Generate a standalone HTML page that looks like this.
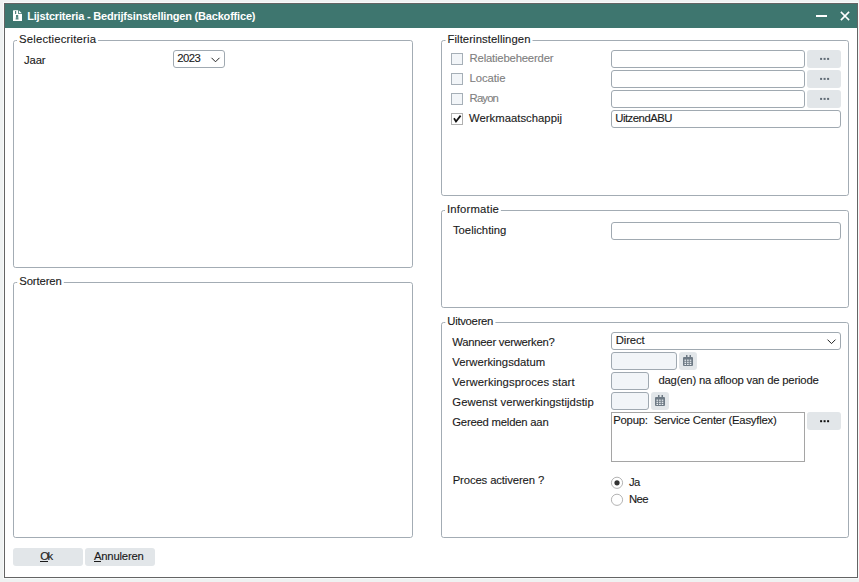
<!DOCTYPE html>
<html><head><meta charset="utf-8"><style>
html,body{margin:0;padding:0;width:859px;height:582px;overflow:hidden;background:#eff2f2}
svg{display:block}
text{font-family:"Liberation Sans", sans-serif}
</style></head><body>
<svg width="859" height="582" viewBox="0 0 859 582">
<rect x="0" y="0" width="859" height="582" fill="#eff2f2"/>
<rect x="3" y="2" width="856" height="577" rx="0" fill="#f8fafa"/>
<rect x="4" y="3" width="854" height="575" rx="0" fill="#646464"/>
<rect x="5" y="4" width="852" height="573" rx="0" fill="#ffffff"/>
<rect x="5" y="4" width="852" height="24" rx="0" fill="#3e766f"/>
<path d="M13.6 10.2 H18.2 V13.9 H22 V21 H13 V10.8 Q13 10.2 13.6 10.2 Z" fill="#fff"/>
<path d="M19 10.6 L21.8 13.2 H19 Z" fill="#fff"/>
<rect x="15" y="11" width="1.2" height="3" fill="#3e766f" opacity="0.9"/>
<rect x="16" y="15" width="2.2" height="2.4" fill="#3e766f" opacity="0.9"/>
<path d="M15.9 17.2 H18.3 L18.6 19.6 H15.6 Z" fill="#3e766f" opacity="0.85"/>
<text x="27.20" y="20" font-size="11" fill="#fff"  font-weight="bold" xml:space="preserve" textLength="228.30" lengthAdjust="spacing" >Lijstcriteria - Bedrijfsinstellingen (Backoffice)</text>
<rect x="816" y="15" width="11" height="2" fill="#fff"/>
<path d="M841.5 12.5 L848.5 19.5 M848.5 12.5 L841.5 19.5" stroke="#fff" stroke-width="1.7" stroke-linecap="square"/>
<rect x="13.5" y="40.5" width="399" height="227" rx="2.2" fill="none" stroke="#a3acb4" stroke-width="1"/>
<rect x="17" y="37" width="81" height="6" fill="#fff"/>
<text x="19.00" y="43" font-size="11.3" fill="#1b1b1b" stroke="#1b1b1b" stroke-width="0.12" font-weight="normal" xml:space="preserve" textLength="77.00" lengthAdjust="spacing" >Selectiecriteria</text>
<rect x="13.5" y="282.5" width="399" height="255" rx="2.2" fill="none" stroke="#a3acb4" stroke-width="1"/>
<rect x="17.2" y="279" width="46.599999999999994" height="6" fill="#fff"/>
<text x="19.20" y="285" font-size="11.3" fill="#1b1b1b" stroke="#1b1b1b" stroke-width="0.12" font-weight="normal" xml:space="preserve" textLength="42.60" lengthAdjust="spacing" >Sorteren</text>
<rect x="441.5" y="40.5" width="407" height="155" rx="2.2" fill="none" stroke="#a3acb4" stroke-width="1"/>
<rect x="445.5" y="37" width="87.0" height="6" fill="#fff"/>
<text x="447.50" y="43" font-size="11.3" fill="#1b1b1b" stroke="#1b1b1b" stroke-width="0.12" font-weight="normal" xml:space="preserve" textLength="83.00" lengthAdjust="spacing" >Filterinstellingen</text>
<rect x="441.5" y="210.5" width="407" height="97" rx="2.2" fill="none" stroke="#a3acb4" stroke-width="1"/>
<rect x="445" y="207" width="55.89999999999998" height="6" fill="#fff"/>
<text x="447.00" y="213" font-size="11.3" fill="#1b1b1b" stroke="#1b1b1b" stroke-width="0.12" font-weight="normal" xml:space="preserve" textLength="51.90" lengthAdjust="spacing" >Informatie</text>
<rect x="441.5" y="322.5" width="407" height="215" rx="2.2" fill="none" stroke="#a3acb4" stroke-width="1"/>
<rect x="445.3" y="319" width="50.099999999999966" height="6" fill="#fff"/>
<text x="447.30" y="325" font-size="11.3" fill="#1b1b1b" stroke="#1b1b1b" stroke-width="0.12" font-weight="normal" xml:space="preserve" textLength="46.10" lengthAdjust="spacing" >Uitvoeren</text>
<text x="24.00" y="64" font-size="11.3" fill="#1b1b1b" stroke="#1b1b1b" stroke-width="0.12" font-weight="normal" xml:space="preserve" textLength="21.60" lengthAdjust="spacing" >Jaar</text>
<rect x="173.5" y="50.5" width="51" height="17" rx="2.5" fill="#fff" stroke="#a0a9b1" stroke-width="1"/>
<text x="177.20" y="62" font-size="11.3" fill="#1b1b1b" stroke="#1b1b1b" stroke-width="0.12" font-weight="normal" xml:space="preserve" textLength="23.70" lengthAdjust="spacing" >2023</text>
<path d="M211.5 57.8 L215.5 61.8 L219.5 57.8" stroke="#222" stroke-width="1" fill="none"/>
<rect x="451.5" y="53.5" width="11" height="11" rx="0" fill="#f2f5f8" stroke="#a6afb7" stroke-width="1"/>
<text x="469.60" y="62" font-size="11.3" fill="#808080" stroke="#808080" stroke-width="0.12" font-weight="normal" xml:space="preserve" textLength="83.90" lengthAdjust="spacing" >Relatiebeheerder</text>
<rect x="611.5" y="50.5" width="193" height="17" rx="2.5" fill="#fff" stroke="#a0a9b1" stroke-width="1"/>
<rect x="807" y="50" width="34" height="18" rx="3" fill="#e2e6e9"/>
<rect x="820.1" y="57.9" width="2" height="2" fill="#5f6a75"/>
<rect x="823.6" y="57.9" width="2" height="2" fill="#5f6a75"/>
<rect x="827.1" y="57.9" width="2" height="2" fill="#5f6a75"/>
<rect x="451.5" y="73.5" width="11" height="11" rx="0" fill="#f2f5f8" stroke="#a6afb7" stroke-width="1"/>
<text x="469.60" y="82" font-size="11.3" fill="#808080" stroke="#808080" stroke-width="0.12" font-weight="normal" xml:space="preserve" textLength="36.00" lengthAdjust="spacing" >Locatie</text>
<rect x="611.5" y="70.5" width="193" height="17" rx="2.5" fill="#fff" stroke="#a0a9b1" stroke-width="1"/>
<rect x="807" y="70" width="34" height="18" rx="3" fill="#e2e6e9"/>
<rect x="820.1" y="77.9" width="2" height="2" fill="#5f6a75"/>
<rect x="823.6" y="77.9" width="2" height="2" fill="#5f6a75"/>
<rect x="827.1" y="77.9" width="2" height="2" fill="#5f6a75"/>
<rect x="451.5" y="93.5" width="11" height="11" rx="0" fill="#f2f5f8" stroke="#a6afb7" stroke-width="1"/>
<text x="469.60" y="102" font-size="11.3" fill="#808080" stroke="#808080" stroke-width="0.12" font-weight="normal" xml:space="preserve" textLength="29.30" lengthAdjust="spacing" >Rayon</text>
<rect x="611.5" y="90.5" width="193" height="17" rx="2.5" fill="#fff" stroke="#a0a9b1" stroke-width="1"/>
<rect x="807" y="90" width="34" height="18" rx="3" fill="#e2e6e9"/>
<rect x="820.1" y="97.9" width="2" height="2" fill="#5f6a75"/>
<rect x="823.6" y="97.9" width="2" height="2" fill="#5f6a75"/>
<rect x="827.1" y="97.9" width="2" height="2" fill="#5f6a75"/>
<rect x="451.5" y="113.5" width="11" height="11" rx="0" fill="#fff" stroke="#b0b0b0" stroke-width="1"/>
<path d="M454 118.3 L456 121.5 L460.6 115.6" stroke="#111" stroke-width="1.75" fill="none"/>
<text x="469.00" y="122" font-size="11.3" fill="#1b1b1b" stroke="#1b1b1b" stroke-width="0.12" font-weight="normal" xml:space="preserve" textLength="93.00" lengthAdjust="spacing" >Werkmaatschappij</text>
<rect x="611.5" y="110.5" width="229" height="17" rx="2.5" fill="#fff" stroke="#a0a9b1" stroke-width="1"/>
<text x="615.20" y="122" font-size="11.3" fill="#1b1b1b" stroke="#1b1b1b" stroke-width="0.12" font-weight="normal" xml:space="preserve" textLength="57.30" lengthAdjust="spacing" >UitzendABU</text>
<text x="452.90" y="234" font-size="11.3" fill="#1b1b1b" stroke="#1b1b1b" stroke-width="0.12" font-weight="normal" xml:space="preserve" textLength="53.50" lengthAdjust="spacing" >Toelichting</text>
<rect x="611.5" y="222.5" width="229" height="17" rx="2.5" fill="#fff" stroke="#a0a9b1" stroke-width="1"/>
<text x="452.30" y="346" font-size="11.3" fill="#1b1b1b" stroke="#1b1b1b" stroke-width="0.12" font-weight="normal" xml:space="preserve" textLength="102.50" lengthAdjust="spacing" >Wanneer verwerken?</text>
<text x="452.30" y="366" font-size="11.3" fill="#1b1b1b" stroke="#1b1b1b" stroke-width="0.12" font-weight="normal" xml:space="preserve" textLength="92.90" lengthAdjust="spacing" >Verwerkingsdatum</text>
<text x="452.30" y="386" font-size="11.3" fill="#1b1b1b" stroke="#1b1b1b" stroke-width="0.12" font-weight="normal" xml:space="preserve" textLength="122.30" lengthAdjust="spacing" >Verwerkingsproces start</text>
<text x="452.30" y="406" font-size="11.3" fill="#1b1b1b" stroke="#1b1b1b" stroke-width="0.12" font-weight="normal" xml:space="preserve" textLength="141.40" lengthAdjust="spacing" >Gewenst verwerkingstijdstip</text>
<text x="452.30" y="426" font-size="11.3" fill="#1b1b1b" stroke="#1b1b1b" stroke-width="0.12" font-weight="normal" xml:space="preserve" textLength="96.40" lengthAdjust="spacing" >Gereed melden aan</text>
<rect x="611.5" y="332.5" width="229" height="17" rx="2.5" fill="#fff" stroke="#a0a9b1" stroke-width="1"/>
<text x="615.70" y="344" font-size="11.3" fill="#1b1b1b" stroke="#1b1b1b" stroke-width="0.12" font-weight="normal" xml:space="preserve" textLength="28.90" lengthAdjust="spacing" >Direct</text>
<path d="M827.5 339.6 L831.5 343.6 L835.5 339.6" stroke="#222" stroke-width="1" fill="none"/>
<rect x="611.5" y="352.5" width="65" height="17" rx="2.5" fill="#f2f5f8" stroke="#a0a9b1" stroke-width="1"/>
<rect x="679" y="352" width="18" height="18" rx="3" fill="#e2e6e9"/>
<rect x="683" y="357" width="10" height="9" rx="1" fill="#6e7a85"/>
<rect x="686" y="355" width="1.5" height="3" fill="#6e7a85"/>
<rect x="689.5" y="355" width="1.5" height="3" fill="#6e7a85"/>
<rect x="684.5" y="359.6" width="1.6" height="1.2" fill="#eef2f5"/>
<rect x="687.1" y="359.6" width="1.6" height="1.2" fill="#eef2f5"/>
<rect x="689.7" y="359.6" width="1.6" height="1.2" fill="#eef2f5"/>
<rect x="684.5" y="361.70000000000005" width="1.6" height="1.2" fill="#eef2f5"/>
<rect x="687.1" y="361.70000000000005" width="1.6" height="1.2" fill="#eef2f5"/>
<rect x="689.7" y="361.70000000000005" width="1.6" height="1.2" fill="#eef2f5"/>
<rect x="684.5" y="363.8" width="1.6" height="1.2" fill="#eef2f5"/>
<rect x="687.1" y="363.8" width="1.6" height="1.2" fill="#eef2f5"/>
<rect x="689.7" y="363.8" width="1.6" height="1.2" fill="#eef2f5"/>
<rect x="611.5" y="372.5" width="37" height="17" rx="2.5" fill="#f2f5f8" stroke="#a0a9b1" stroke-width="1"/>
<text x="658.40" y="384" font-size="11.3" fill="#1b1b1b" stroke="#1b1b1b" stroke-width="0.12" font-weight="normal" xml:space="preserve" textLength="160.40" lengthAdjust="spacing" >dag(en) na afloop van de periode</text>
<rect x="611.5" y="392.5" width="37" height="17" rx="2.5" fill="#f2f5f8" stroke="#a0a9b1" stroke-width="1"/>
<rect x="651" y="392" width="18" height="18" rx="3" fill="#e2e6e9"/>
<rect x="655" y="397" width="10" height="9" rx="1" fill="#6e7a85"/>
<rect x="658" y="395" width="1.5" height="3" fill="#6e7a85"/>
<rect x="661.5" y="395" width="1.5" height="3" fill="#6e7a85"/>
<rect x="656.5" y="399.6" width="1.6" height="1.2" fill="#eef2f5"/>
<rect x="659.1" y="399.6" width="1.6" height="1.2" fill="#eef2f5"/>
<rect x="661.7" y="399.6" width="1.6" height="1.2" fill="#eef2f5"/>
<rect x="656.5" y="401.70000000000005" width="1.6" height="1.2" fill="#eef2f5"/>
<rect x="659.1" y="401.70000000000005" width="1.6" height="1.2" fill="#eef2f5"/>
<rect x="661.7" y="401.70000000000005" width="1.6" height="1.2" fill="#eef2f5"/>
<rect x="656.5" y="403.8" width="1.6" height="1.2" fill="#eef2f5"/>
<rect x="659.1" y="403.8" width="1.6" height="1.2" fill="#eef2f5"/>
<rect x="661.7" y="403.8" width="1.6" height="1.2" fill="#eef2f5"/>
<rect x="611.5" y="412.5" width="193" height="49" rx="0" fill="#fff" stroke="#a5a5a5" stroke-width="1"/>
<text x="613.20" y="424" font-size="11.3" fill="#1b1b1b" stroke="#1b1b1b" stroke-width="0.12" font-weight="normal" xml:space="preserve" textLength="163.60" lengthAdjust="spacing" >Popup:  Service Center (Easyflex)</text>
<rect x="807" y="412" width="34" height="18" rx="3" fill="#e2e6e9"/>
<rect x="820.1" y="420.2" width="2" height="2" fill="#111"/>
<rect x="823.6" y="420.2" width="2" height="2" fill="#111"/>
<rect x="827.1" y="420.2" width="2" height="2" fill="#111"/>
<text x="452.70" y="484" font-size="11.3" fill="#1b1b1b" stroke="#1b1b1b" stroke-width="0.12" font-weight="normal" xml:space="preserve" textLength="91.50" lengthAdjust="spacing" >Proces activeren ?</text>
<circle cx="617" cy="482.8" r="5.6" fill="#fff" stroke="#b4b4b4" stroke-width="1"/>
<circle cx="617" cy="482.8" r="2.6" fill="#333"/>
<circle cx="617" cy="499.8" r="5.6" fill="#fff" stroke="#b4b4b4" stroke-width="1"/>
<text x="629.00" y="486" font-size="11.3" fill="#1b1b1b" stroke="#1b1b1b" stroke-width="0.12" font-weight="normal" xml:space="preserve" textLength="11.40" lengthAdjust="spacing" >Ja</text>
<text x="629.00" y="503" font-size="11.3" fill="#1b1b1b" stroke="#1b1b1b" stroke-width="0.12" font-weight="normal" xml:space="preserve" textLength="19.60" lengthAdjust="spacing" >Nee</text>
<rect x="13" y="548" width="70" height="18" rx="3" fill="#e2e6e9"/>
<text x="40.20" y="560" font-size="11.3" fill="#1b1b1b" stroke="#1b1b1b" stroke-width="0.12" font-weight="normal" xml:space="preserve" textLength="12.90" lengthAdjust="spacing" >Ok</text>
<rect x="40" y="561" width="8" height="1" fill="#1b1b1b"/>
<rect x="85" y="548" width="70" height="18" rx="3" fill="#e2e6e9"/>
<text x="93.90" y="560" font-size="11.3" fill="#1b1b1b" stroke="#1b1b1b" stroke-width="0.12" font-weight="normal" xml:space="preserve" textLength="50.00" lengthAdjust="spacing" >Annuleren</text>
<rect x="94" y="561" width="7" height="1" fill="#1b1b1b"/>
</svg>
</body></html>
